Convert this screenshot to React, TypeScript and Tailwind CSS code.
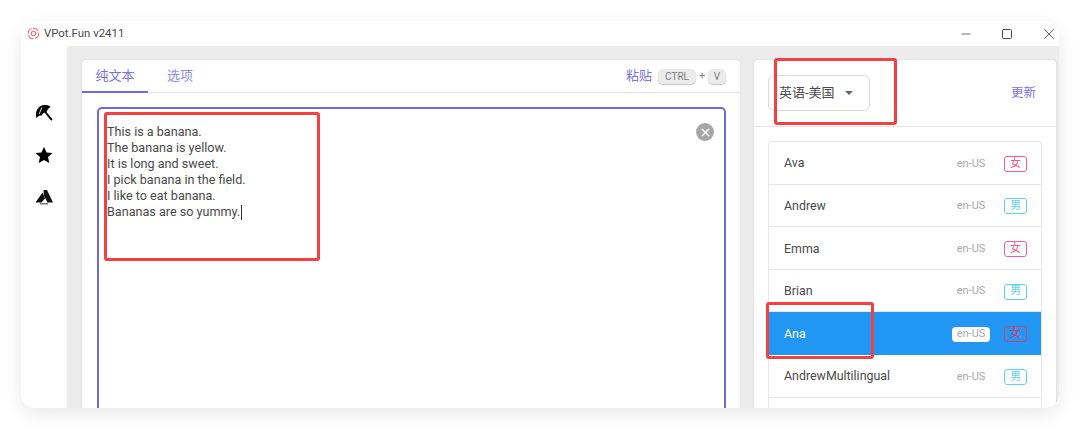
import { Minus, Square, X } from "lucide-react";

const voices = [
  { name: "Ava", gender: "女" },
  { name: "Andrew", gender: "男" },
  { name: "Emma", gender: "女" },
  { name: "Brian", gender: "男" },
  { name: "Ana", gender: "女", active: true },
  { name: "AndrewMultilingual", gender: "男" },
  { name: "", gender: "" },
];

const lines = [
  "This is a banana.",
  "The banana is yellow.",
  "It is long and sweet.",
  "I pick banana in the field.",
  "I like to eat banana.",
];

const Key = ({ label, width }: { label: string; width: string }) => (
  <span
    className={`flex h-[15px] items-center justify-center rounded-[5px] bg-[#ebebeb] text-[10px] text-[#808080] shadow-[0_1px_1px_#c4c4c4] ${width}`}
  >
    {label}
  </span>
);

const Logo = () => (
  <svg width="13" height="13" viewBox="0 0 14 14" fill="none" stroke="#f4727a">
    <circle cx="7" cy="7" r="5.7" strokeWidth="1.2" strokeDasharray="7 1.5" />
    <circle cx="7" cy="7" r="2.4" strokeWidth="1.2" />
  </svg>
);

const Sidebar = () => (
  <aside className="flex w-[46px] shrink-0 flex-col items-center gap-[24px] bg-white pt-[58px]">
    <svg width="18" height="18" viewBox="0 0 18 18" fill="#000">
      <path d="M1.500 14C-.2 8.500 2.500 2.800 7.500 1.300 10.800.4 13.500 1 15.500 2.800L13 5 11.500 8 8.500 9 6.500 11.500 4 11.800Z" />
      <path d="M8.500 7.200 9.800 6 17.500 15.300 16.200 16.700Z" />
      <path d="M6.800 3.500 4.300 9.800" stroke="#fff" strokeWidth="0.9" fill="none" />
    </svg>
    <svg width="18" height="18" viewBox="0 0 18 18" fill="#000">
      <path d="M9 .8 11.500 6.400 17.500 7 13 11.100 14.300 17 9 14 3.700 17 5 11.100.5 7 6.500 6.400Z" />
    </svg>
    <svg className="mt-[2px]" width="18" height="15" viewBox="0 0 18 15" fill="#111">
      <path d="M8.500 0 12 0 18 12.500H12.500L8.800 5.500Z" />
      <path d="M7.500 2.500 10 8.500 6.500 12.500H.5Z" />
      <rect x="5" y="13" width="8" height="1.500" fill="#777" />
    </svg>
  </aside>
);

const EditorCard = () => (
  <section className="flex h-full w-[658px] flex-col rounded-t-[4px] bg-white shadow-[0_0_2px_#ccc]">
    <div className="flex h-[33px] shrink-0 items-center justify-between border-b border-[#e6e6e6] pr-[14px]">
      <div className="flex h-full">
        <div className="flex h-[33px] w-[66px] items-center justify-center border-b-2 border-[#6f68e4] text-[13px] text-[#7a73e6]">
          纯文本
        </div>
        <div className="flex h-full items-center pl-[19px] text-[13px] text-[#8f89ea]">选项</div>
      </div>
      <div className="flex items-center">
        <span className="mr-[6px] text-[13px] text-[#7a73e6]">粘贴</span>
        <Key label="CTRL" width="w-[38px]" />
        <span className="mx-[3px] w-[6px] text-center text-[11px] text-[#888]">+</span>
        <Key label="V" width="w-[18px]" />
      </div>
    </div>
    <div className="flex-1 px-[15px] pt-[14px]">
      <div className="relative h-[400px] w-[629px] rounded-[5px] border-2 border-[#6f68e4] pl-[8px] pt-[15px] text-[12.6px] leading-[16px] text-[#4a4a4a]">
        {lines.map((line) => (
          <div key={line}>{line}</div>
        ))}
        <div className="flex items-center">
          Bananas are so yummy.
          <span className="ml-[1px] h-[15px] w-px bg-[#333]" />
        </div>
        <span className="absolute right-[10px] top-[14px] flex h-[18px] w-[18px] items-center justify-center rounded-full bg-[#a6a6a6]">
          <X size={13} strokeWidth={3} color="#fff" />
        </span>
      </div>
    </div>
  </section>
);

const VoiceCard = () => (
  <section className="flex h-full w-[302px] flex-col rounded-t-[4px] bg-white shadow-[0_0_2px_#ccc]">
    <div className="flex h-[67px] shrink-0 items-center justify-between border-b border-[#e6e6e6] pl-[14px] pr-[20px]">
      <div className="flex h-[36px] w-[102px] items-center rounded-[6px] border border-[#d9d9d9] pl-[10px] text-[13px] text-[#4a4a4a]">
        英语-美国
        <span className="ml-[10px] h-0 w-0 border-x-[4.500px] border-t-[4.500px] border-x-transparent border-t-[#666]" />
      </div>
      <span className="text-[12.500px] text-[#7a73e6]">更新</span>
    </div>
    <div className="mx-[14px] mt-[14px] rounded-t-[4px] border-x border-t border-[#e6e6e6]">
      {voices.map((voice, i) => (
        <div
          key={i}
          className={`flex h-[42.600px] items-center border-b pl-[15px] pr-[14px] pt-[2px] text-[12.400px] ${
            voice.active ? "border-[#2196f3] bg-[#2196f3] text-white" : "border-[#e6e6e6] text-[#4a4a4a]"
          }`}
        >
          <span className="flex-1">{voice.name}</span>
          {voice.name && (
            <>
              <span
                className={`mr-[14px] flex h-[15px] w-[38px] items-center justify-center rounded-[4px] text-[11px] text-[#aaa] ${
                  voice.active ? "bg-white" : ""
                }`}
              >
                en-US
              </span>
              <span
                className={`flex h-[16px] w-[23px] items-center justify-center rounded-[3px] border text-[11px] ${
                  voice.gender === "女"
                    ? voice.active
                      ? "border-[#d8406e] text-[#d8406e]"
                      : "border-[#f0608a] text-[#f0608a]"
                    : "border-[#5fd3f3] text-[#5fd3f3]"
                }`}
              >
                {voice.gender}
              </span>
            </>
          )}
        </div>
      ))}
    </div>
  </section>
);

export default function App() {
  return (
    <div
      className="relative h-[429px] w-[1080px] overflow-hidden bg-white pl-[21px] pt-[21px]"
      style={{ fontFamily: "Roboto, 'Noto Sans CJK SC', sans-serif" }}
    >
      <div className="flex h-[387px] w-[1038px] flex-col overflow-hidden rounded-[14px] bg-white shadow-[0_6px_18px_rgba(0,0,0,0.09)]">
        <header className="flex h-[25px] shrink-0 items-center justify-between text-[#4a4a4a]">
          <div className="flex items-center gap-[4px] pl-[6px] text-[11.400px]">
            <Logo />
            <span>VPot.Fun v2411</span>
          </div>
          <div className="flex items-center pr-[1px] text-[#333]">
            <Minus size={14} strokeWidth={1.200} />
            <Square className="ml-[28px]" size={12} strokeWidth={1.800} />
            <X className="ml-[27px]" size={18} strokeWidth={1} />
          </div>
        </header>
        <div className="flex min-h-0 flex-1">
          <Sidebar />
          <main className="flex min-w-0 flex-1 gap-[14px] overflow-hidden bg-[#ececec] pl-[15px] pt-[14px]">
            <EditorCard />
            <VoiceCard />
          </main>
        </div>
      </div>
      {/* red annotations sitting over the screenshot */}
      <div className="absolute left-[104px] top-[112px] h-[149px] w-[216px] rounded-[3px] border-[3px] border-[#f44040]" />
      <div className="absolute left-[774px] top-[58px] h-[67px] w-[123px] rounded-[3px] border-[3px] border-[#f44040]" />
      <div className="absolute left-[766px] top-[302px] h-[57px] w-[108px] rounded-[3px] border-[3px] border-[#f44040]" />
    </div>
  );
}
